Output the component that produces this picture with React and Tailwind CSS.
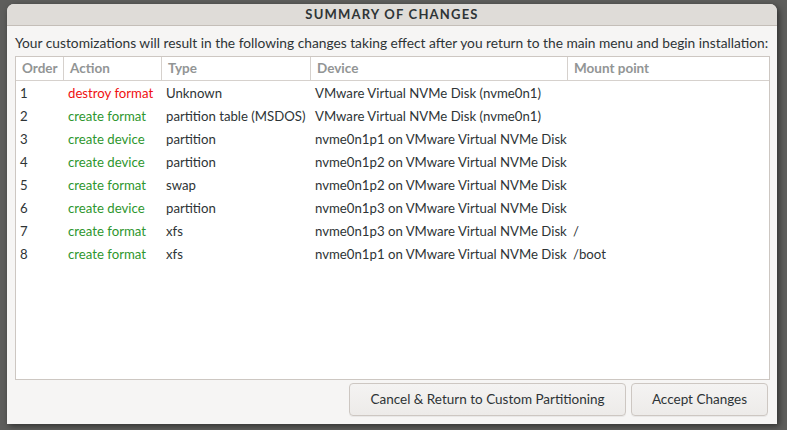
import React from "react";

const rows = [
  ["1", "destroy format", "red", "Unknown", "VMware Virtual NVMe Disk (nvme0n1)", ""],
  ["2", "create format", "green", "partition table (MSDOS)", "VMware Virtual NVMe Disk (nvme0n1)", ""],
  ["3", "create device", "green", "partition", "nvme0n1p1 on VMware Virtual NVMe Disk", ""],
  ["4", "create device", "green", "partition", "nvme0n1p2 on VMware Virtual NVMe Disk", ""],
  ["5", "create format", "green", "swap", "nvme0n1p2 on VMware Virtual NVMe Disk", ""],
  ["6", "create device", "green", "partition", "nvme0n1p3 on VMware Virtual NVMe Disk", ""],
  ["7", "create format", "green", "xfs", "nvme0n1p3 on VMware Virtual NVMe Disk", "/"],
  ["8", "create format", "green", "xfs", "nvme0n1p1 on VMware Virtual NVMe Disk", "/boot"],
];

export default function App() {
  return (
    <div
      className="w-[787px] h-[430px] bg-[#5e5e5c] pl-[7px] pt-[4px] overflow-hidden text-[#2e3436]"
      style={{ fontFamily: 'Lato, "Noto Sans", sans-serif' }}
    >
      <div className="w-[770px] h-[420px] bg-[#f6f5f4] rounded-t-[7px] flex flex-col shadow-[2px_2px_6px_rgba(0,0,0,0.5)]">
        <div className="h-[22px] bg-[#dfdcd8] rounded-t-[7px] border-b border-[#c4beb8] flex items-center justify-center">
          <span className="text-[13px] font-bold tracking-[1.2px] leading-none">SUMMARY OF CHANGES</span>
        </div>
        <div className="px-[8px] pt-[8px] text-[13.75px] leading-[18px] whitespace-nowrap">
          Your customizations will result in the following changes taking effect after you return to the main menu and begin installation:
        </div>
        <div className="mx-[8px] mr-[7px] mt-[4px] h-[324px] border border-[#cdc7c2] bg-white">
          <div className="flex h-[24px] border-b border-[#d6d1cd] text-[13.5px] font-bold text-[#929595]">
            <div className="w-[48px] border-r border-[#d6d1cd] pl-[6px] flex items-center">Order</div>
            <div className="w-[98px] border-r border-[#d6d1cd] pl-[6px] flex items-center">Action</div>
            <div className="w-[149px] border-r border-[#d6d1cd] pl-[6px] flex items-center">Type</div>
            <div className="w-[257px] border-r border-[#d6d1cd] pl-[6px] flex items-center">Device</div>
            <div className="flex-1 pl-[6px] flex items-center">Mount point</div>
          </div>
          <div className="pt-[1px] text-[13.2px]">
            {rows.map((r) => (
              <div key={r[0]} className="flex h-[23px] items-center whitespace-nowrap">
                <div className="w-[48px] pl-[4px]">{r[0]}</div>
                <div className={"w-[98px] pl-[4px] " + (r[2] === "red" ? "text-[#f01010]" : "text-[#2e962e]")}>{r[1]}</div>
                <div className="w-[149px] pl-[4px]">{r[3]}</div>
                <div className="w-[257px] pl-[4px]">{r[4]}</div>
                <div className="flex-1 pl-[5px]">{r[5]}</div>
              </div>
            ))}
          </div>
        </div>
        <div className="flex justify-end gap-[5px] pr-[9px] pt-[3px]">
          <button className="w-[277px] h-[33px] rounded-[4px] border border-[#cdc7c2] bg-gradient-to-b from-[#f4f3f2] to-[#edebe9] text-[13.5px] shadow-[0_1px_0_rgba(0,0,0,0.05)]">
            Cancel &amp; Return to Custom Partitioning
          </button>
          <button className="w-[137px] h-[33px] rounded-[4px] border border-[#cdc7c2] bg-gradient-to-b from-[#f4f3f2] to-[#edebe9] text-[13.5px] shadow-[0_1px_0_rgba(0,0,0,0.05)]">
            Accept Changes
          </button>
        </div>
      </div>
    </div>
  );
}
